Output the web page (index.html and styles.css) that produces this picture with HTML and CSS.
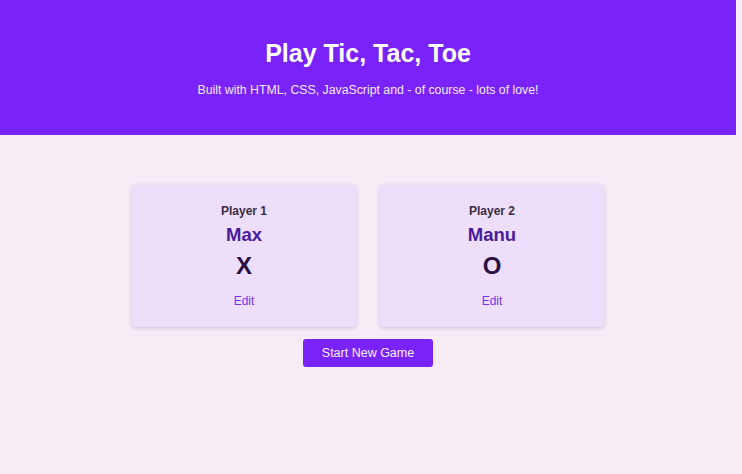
FILE: index.html
```html
<!DOCTYPE html>
<html lang="en">
<head>
<meta charset="utf-8">
<title>Tic Tac Toe</title>
<link rel="stylesheet" href="styles.css">
</head>
<body>
<div class="page">
  <header class="hero">
    <h1>Play Tic, Tac, Toe</h1>
    <p>Built with HTML, CSS, JavaScript and - of course - lots of love!</p>
  </header>
  <main class="content">
    <ol class="players">
      <li class="card">
        <h2>Player 1</h2>
        <div class="name">Max</div>
        <div class="symbol">X</div>
        <button class="edit">Edit</button>
      </li>
      <li class="card">
        <h2>Player 2</h2>
        <div class="name">Manu</div>
        <div class="symbol">O</div>
        <button class="edit">Edit</button>
      </li>
    </ol>
    <button class="start">Start New Game</button>
  </main>
</div>
</body>
</html>
```
FILE: styles.css
```css
* { box-sizing: border-box; }
html, body { margin: 0; padding: 0; }
body {
  background: #f6ecf5;
  font-family: "Liberation Sans", Arial, sans-serif;
  height: 474px;
  overflow: hidden;
}
.page { width: 736px; }
.hero {
  background: #7a22fa;
  color: #fff;
  height: 135px;
  text-align: center;
  padding-top: 38px;
}
.hero h1 {
  margin: 0;
  font-size: 25px;
  line-height: 30px;
  font-weight: 700;
}
.hero p {
  margin: 14px 0 0;
  font-size: 12.3px;
  line-height: 16px;
  color: #f3eaff;
}
.content {
  display: flex;
  flex-direction: column;
  align-items: center;
  padding-top: 50px;
}
.players {
  list-style: none;
  margin: 0;
  padding: 0;
  display: flex;
  gap: 24px;
}
.card {
  width: 224px;
  height: 142px;
  background: #eddffc;
  border-radius: 4px;
  box-shadow: 0 1px 4px rgba(60, 20, 90, 0.22);
  display: flex;
  flex-direction: column;
  align-items: center;
  padding-top: 18px;
}
.card h2 {
  margin: 0;
  font-size: 12px;
  line-height: 16px;
  font-weight: 700;
  color: #3b2c41;
}
.name {
  margin-top: 5px;
  font-size: 18.5px;
  line-height: 22px;
  font-weight: 700;
  color: #4b1a9c;
}
.symbol {
  margin-top: 7px;
  font-size: 24px;
  line-height: 26px;
  font-weight: 700;
  color: #2a0f45;
}
.edit {
  margin-top: 15px;
  background: none;
  border: none;
  padding: 0;
  font: inherit;
  font-size: 12px;
  line-height: 14px;
  color: #7b2ff0;
  cursor: pointer;
}
.start {
  margin-top: 12px;
  width: 130px;
  height: 28px;
  border: none;
  border-radius: 3px;
  background: #7a22fa;
  color: #f7efff;
  font: inherit;
  font-size: 12.5px;
  cursor: pointer;
}
```
